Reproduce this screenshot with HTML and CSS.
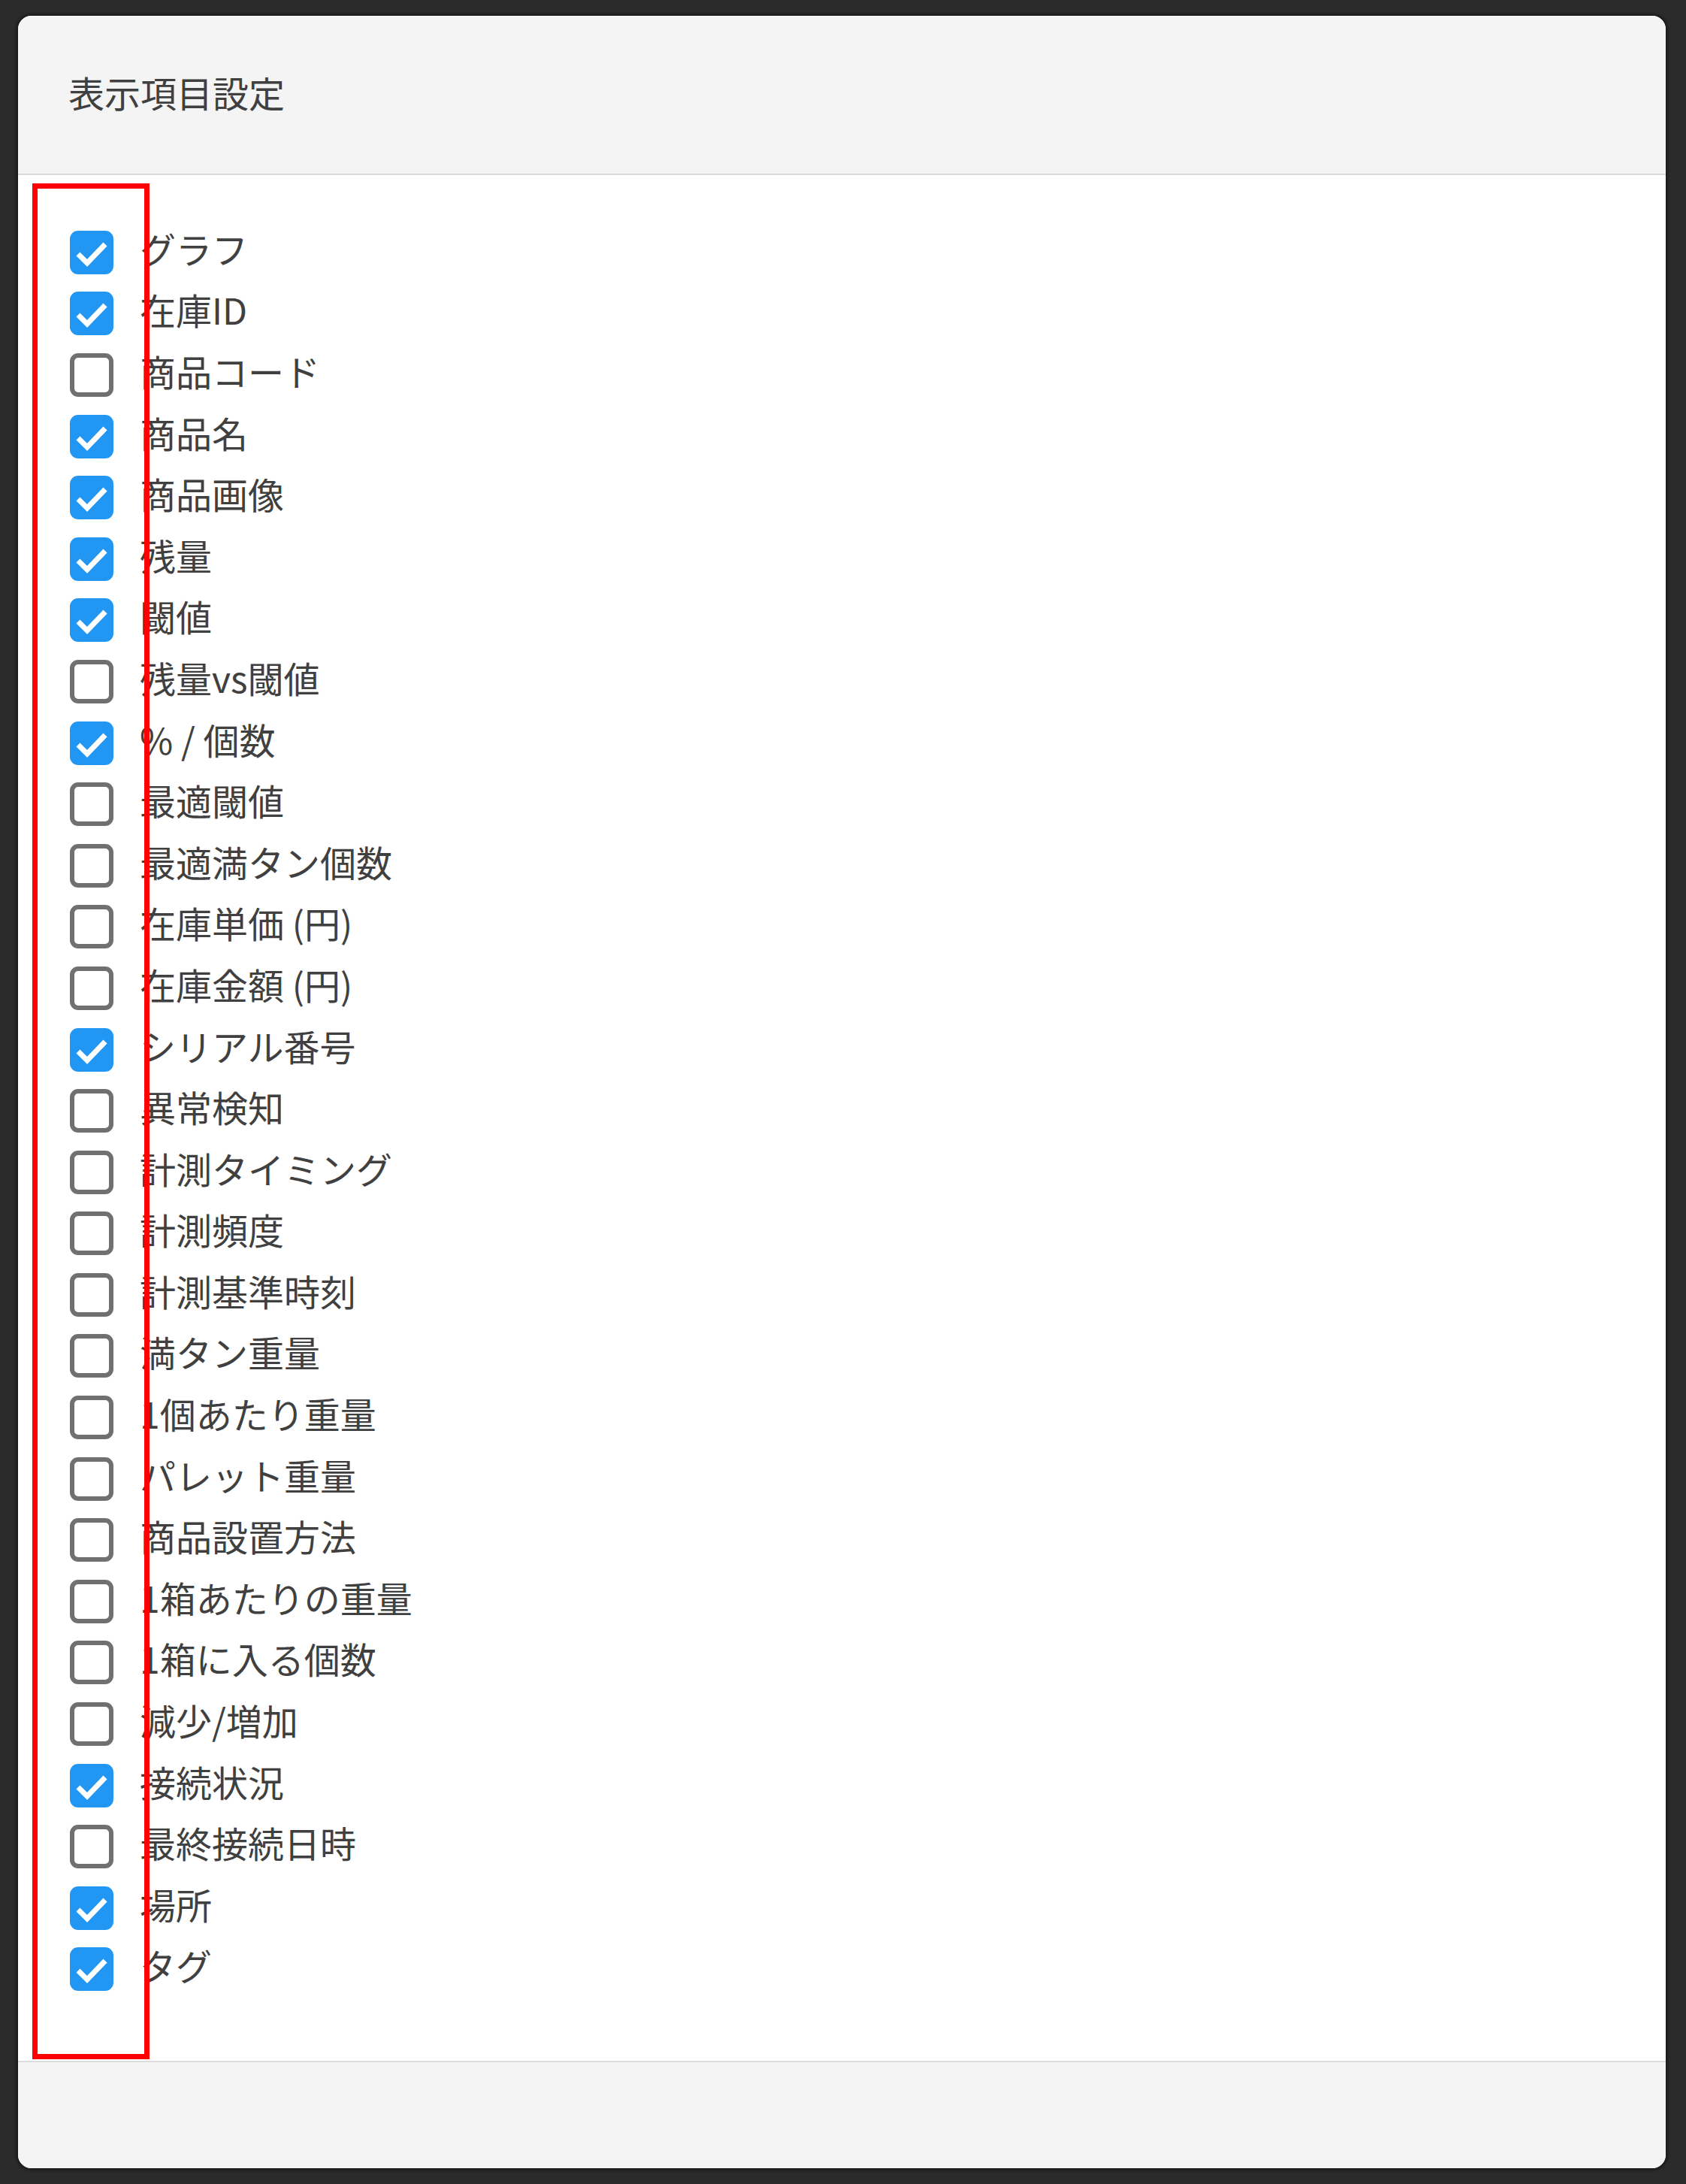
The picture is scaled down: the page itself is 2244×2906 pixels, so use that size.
FILE: index.html
```html
<!doctype html>
<html lang="ja">
<head>
	<meta charset="UTF-8"/>
	<title>表示項目設定</title>
	<link rel="stylesheet" href="styles.css">
</head>
<body>
	<div class="modal">
		<div class="modalHead">
			<h2 class="modalTitle">表示項目設定</h2>
		</div>
		<div class="modalBody">
			<ul class="colList">
				<li><label class="item"><input type="checkbox" checked><span class="box"><svg viewBox="0 0 58 58"><polyline points="11,31 23,43 47,18"/></svg></span><span class="txt">グラフ</span></label></li>
				<li><label class="item"><input type="checkbox" checked><span class="box"><svg viewBox="0 0 58 58"><polyline points="11,31 23,43 47,18"/></svg></span><span class="txt">在庫ID</span></label></li>
				<li><label class="item"><input type="checkbox"><span class="box"><svg viewBox="0 0 58 58"><polyline points="11,31 23,43 47,18"/></svg></span><span class="txt">商品コード</span></label></li>
				<li><label class="item"><input type="checkbox" checked><span class="box"><svg viewBox="0 0 58 58"><polyline points="11,31 23,43 47,18"/></svg></span><span class="txt">商品名</span></label></li>
				<li><label class="item"><input type="checkbox" checked><span class="box"><svg viewBox="0 0 58 58"><polyline points="11,31 23,43 47,18"/></svg></span><span class="txt">商品画像</span></label></li>
				<li><label class="item"><input type="checkbox" checked><span class="box"><svg viewBox="0 0 58 58"><polyline points="11,31 23,43 47,18"/></svg></span><span class="txt">残量</span></label></li>
				<li><label class="item"><input type="checkbox" checked><span class="box"><svg viewBox="0 0 58 58"><polyline points="11,31 23,43 47,18"/></svg></span><span class="txt">閾値</span></label></li>
				<li><label class="item"><input type="checkbox"><span class="box"><svg viewBox="0 0 58 58"><polyline points="11,31 23,43 47,18"/></svg></span><span class="txt">残量vs閾値</span></label></li>
				<li><label class="item"><input type="checkbox" checked><span class="box"><svg viewBox="0 0 58 58"><polyline points="11,31 23,43 47,18"/></svg></span><span class="txt">% / 個数</span></label></li>
				<li><label class="item"><input type="checkbox"><span class="box"><svg viewBox="0 0 58 58"><polyline points="11,31 23,43 47,18"/></svg></span><span class="txt">最適閾値</span></label></li>
				<li><label class="item"><input type="checkbox"><span class="box"><svg viewBox="0 0 58 58"><polyline points="11,31 23,43 47,18"/></svg></span><span class="txt">最適満タン個数</span></label></li>
				<li><label class="item"><input type="checkbox"><span class="box"><svg viewBox="0 0 58 58"><polyline points="11,31 23,43 47,18"/></svg></span><span class="txt">在庫単価 (円)</span></label></li>
				<li><label class="item"><input type="checkbox"><span class="box"><svg viewBox="0 0 58 58"><polyline points="11,31 23,43 47,18"/></svg></span><span class="txt">在庫金額 (円)</span></label></li>
				<li><label class="item"><input type="checkbox" checked><span class="box"><svg viewBox="0 0 58 58"><polyline points="11,31 23,43 47,18"/></svg></span><span class="txt">シリアル番号</span></label></li>
				<li><label class="item"><input type="checkbox"><span class="box"><svg viewBox="0 0 58 58"><polyline points="11,31 23,43 47,18"/></svg></span><span class="txt">異常検知</span></label></li>
				<li><label class="item"><input type="checkbox"><span class="box"><svg viewBox="0 0 58 58"><polyline points="11,31 23,43 47,18"/></svg></span><span class="txt">計測タイミング</span></label></li>
				<li><label class="item"><input type="checkbox"><span class="box"><svg viewBox="0 0 58 58"><polyline points="11,31 23,43 47,18"/></svg></span><span class="txt">計測頻度</span></label></li>
				<li><label class="item"><input type="checkbox"><span class="box"><svg viewBox="0 0 58 58"><polyline points="11,31 23,43 47,18"/></svg></span><span class="txt">計測基準時刻</span></label></li>
				<li><label class="item"><input type="checkbox"><span class="box"><svg viewBox="0 0 58 58"><polyline points="11,31 23,43 47,18"/></svg></span><span class="txt">満タン重量</span></label></li>
				<li><label class="item"><input type="checkbox"><span class="box"><svg viewBox="0 0 58 58"><polyline points="11,31 23,43 47,18"/></svg></span><span class="txt">1個あたり重量</span></label></li>
				<li><label class="item"><input type="checkbox"><span class="box"><svg viewBox="0 0 58 58"><polyline points="11,31 23,43 47,18"/></svg></span><span class="txt">パレット重量</span></label></li>
				<li><label class="item"><input type="checkbox"><span class="box"><svg viewBox="0 0 58 58"><polyline points="11,31 23,43 47,18"/></svg></span><span class="txt">商品設置方法</span></label></li>
				<li><label class="item"><input type="checkbox"><span class="box"><svg viewBox="0 0 58 58"><polyline points="11,31 23,43 47,18"/></svg></span><span class="txt">1箱あたりの重量</span></label></li>
				<li><label class="item"><input type="checkbox"><span class="box"><svg viewBox="0 0 58 58"><polyline points="11,31 23,43 47,18"/></svg></span><span class="txt">1箱に入る個数</span></label></li>
				<li><label class="item"><input type="checkbox"><span class="box"><svg viewBox="0 0 58 58"><polyline points="11,31 23,43 47,18"/></svg></span><span class="txt">減少/増加</span></label></li>
				<li><label class="item"><input type="checkbox" checked><span class="box"><svg viewBox="0 0 58 58"><polyline points="11,31 23,43 47,18"/></svg></span><span class="txt">接続状況</span></label></li>
				<li><label class="item"><input type="checkbox"><span class="box"><svg viewBox="0 0 58 58"><polyline points="11,31 23,43 47,18"/></svg></span><span class="txt">最終接続日時</span></label></li>
				<li><label class="item"><input type="checkbox" checked><span class="box"><svg viewBox="0 0 58 58"><polyline points="11,31 23,43 47,18"/></svg></span><span class="txt">場所</span></label></li>
				<li><label class="item"><input type="checkbox" checked><span class="box"><svg viewBox="0 0 58 58"><polyline points="11,31 23,43 47,18"/></svg></span><span class="txt">タグ</span></label></li>
			</ul>
		</div>
		<div class="modalFoot"></div>

		<!-- annotation frame -->
		<div class="mark"></div>
	</div>
</body>
</html>
```

FILE: styles.css
```css
*				{ padding:0; margin:0; box-sizing:border-box; }
ul				{ list-style-type:none; }
body			{ background:#2b2b2b; font-family:"Noto Sans CJK JP", "Noto Sans", sans-serif; color:#404040; }

.modal			{ position:relative; margin:21px 27px 21px 24px; height:2864px; display:flex; flex-direction:column; background:#fff; border-radius:18px; overflow:hidden; box-shadow:0 0 0 1px #1c1c1c, 0 0 4px 2px rgba(0,0,0,0.5); }
.modalHead		{ height:212px; flex:none; display:flex; align-items:center; padding:0 0 8px 67px; background:#f4f4f4; border-bottom:2px solid #dcdcdc; }
.modalTitle		{ font-size:48px; font-weight:400; line-height:1; color:#404040; }
.modalBody		{ flex:1; padding:62px 0 0 69px; }
.modalFoot		{ height:143px; flex:none; background:#f4f4f4; border-top:2px solid #dcdcdc; }

.colList li		{ height:81.6px; }
.item			{ height:100%; display:flex; align-items:center; gap:35px; cursor:pointer; }
.item input		{ display:none; }
.box			{ width:58px; height:58px; flex:none; border:6px solid #707070; border-radius:11px; background:#fff; }
.box svg		{ display:none; width:58px; height:58px; margin:-6px; fill:none; stroke:#fff; stroke-width:7; }
.item input:checked + .box			{ background:#2196f3; border-color:#2196f3; }
.item input:checked + .box svg		{ display:block; }
.txt			{ font-size:48px; line-height:1; padding-bottom:12px; white-space:nowrap; }

.mark			{ position:absolute; left:19px; top:223px; width:156px; height:2496px; border:7px solid #ff0000; pointer-events:none; }
```
